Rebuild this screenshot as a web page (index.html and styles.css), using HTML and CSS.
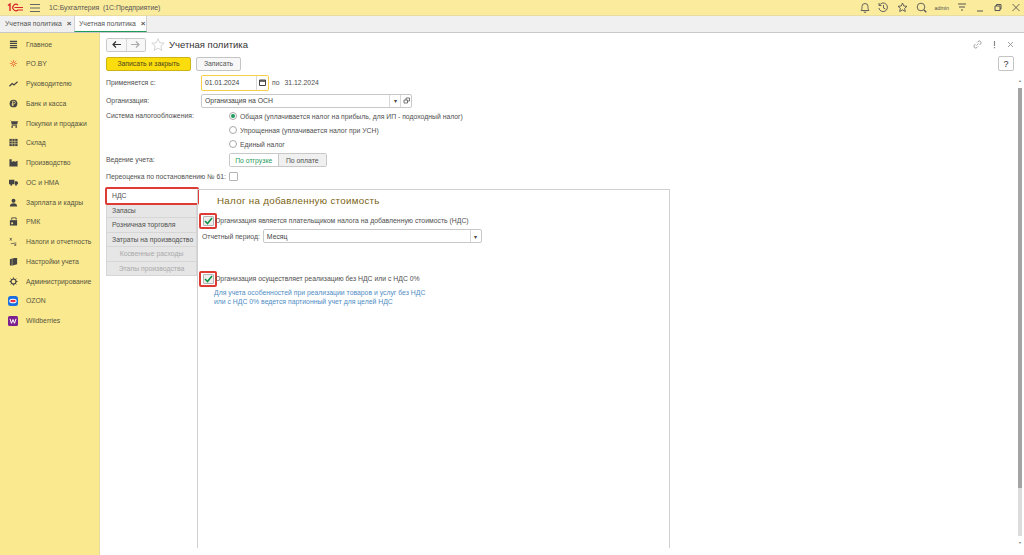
FILE: index.html
```html
<!DOCTYPE html>
<html lang="ru">
<head>
    <meta charset="UTF-8">
    <title>Учетная политика</title>
    <link rel="stylesheet" href="styles.css">
</head>
<body>
    <div class="topbar">
        <svg class="logo" width="16" height="9" viewBox="0 0 16 9"><path d="M1 2.500L3 1v7" fill="none" stroke="#d8232a" stroke-width="1.400"/><path d="M11 2A3.200 3.200 0 1 0 11 7H16" fill="none" stroke="#d8232a" stroke-width="1.200"/><path d="M7.500 4.500H16" stroke="#d8232a" stroke-width="1"/></svg>
        <svg class="burger" width="10" height="8" viewBox="0 0 10 8"><path d="M0 .5h10M0 4h10M0 7.500h10" stroke="#666" stroke-width="1"/></svg>
        <div class="app-title">1С:Бухгалтерия&nbsp; (1С:Предприятие)</div>
        <div class="top-icons">
            <svg class="ti" width="10" height="11" viewBox="0 0 10 11"><path d="M1 8.500c1-1 1-2 1-4a3 3 0 0 1 6 0c0 2 0 3 1 4zM4 9.500a1 1 0 0 0 2 0" fill="none" stroke="#555" stroke-width=".9"/></svg>
            <svg class="ti" width="11" height="11" viewBox="0 0 11 11"><path d="M1.500 3a4.300 4.300 0 1 1-.6 3M1 1v2.500h2.500M5.500 3v3l2 1" fill="none" stroke="#555" stroke-width=".9"/></svg>
            <svg class="ti" width="11" height="11" viewBox="0 0 11 11"><path d="M5.500 1l1.300 3 3.200.3-2.400 2.100.7 3.100-2.800-1.600-2.800 1.600.7-3.100L1 4.300l3.200-.3z" fill="none" stroke="#555" stroke-width=".9"/></svg>
            <svg class="ti" width="11" height="11" viewBox="0 0 11 11"><circle cx="5" cy="5" r="3.800" fill="none" stroke="#555" stroke-width=".9"/><path d="M8 8l2.300 2.300" stroke="#555" stroke-width="1.300"/></svg>
            <span class="user">admin</span>
            <svg class="ti" width="10" height="9" viewBox="0 0 10 9"><path d="M1 1h8M2 4h6M4 7h2" stroke="#555" stroke-width="1"/></svg>
            <svg class="ti" width="10" height="9" viewBox="0 0 10 9"><path d="M2 8h6" stroke="#555" stroke-width="1"/></svg>
            <svg class="ti" width="10" height="9" viewBox="0 0 10 9"><path d="M2 3h5v4.500H2zM3.500 3V1.500H8V6H7" fill="none" stroke="#555" stroke-width="1"/></svg>
            <svg class="ti" width="10" height="9" viewBox="0 0 10 9"><path d="M1.500 1l7 7M8.500 1l-7 7" stroke="#555" stroke-width=".9"/></svg>
        </div>
    </div>

    <div class="tabbar">
        <div class="doc-tab">Учетная политика <span class="tab-x">×</span></div>
        <div class="doc-tab active">Учетная политика <span class="tab-x">×</span></div>
    </div>

    <div class="main">
        <nav class="sidebar">
            <div class="nav-item">
                <svg class="nav-icon" viewBox="0 0 10 10"><path d="M1 1.500h8M1 3.800h8M1 6.200h8M1 8.500h8" stroke="#444" stroke-width="1.300"/></svg>
                Главное
            </div>
            <div class="nav-item">
                <svg class="nav-icon" viewBox="0 0 10 10"><path d="M5 1v8M1 5h8M2 2l6 6M8 2L2 8" stroke="#e2672f" stroke-width=".8"/><circle cx="5" cy="5" r="1.500" fill="#fbe98f" stroke="#e2672f" stroke-width=".7"/></svg>
                PO.BY
            </div>
            <div class="nav-item">
                <svg class="nav-icon" viewBox="0 0 10 10"><path d="M.5 8l3-3 2 1.500L9.500 3" fill="none" stroke="#444" stroke-width="1.400"/></svg>
                Руководителю
            </div>
            <div class="nav-item">
                <svg class="nav-icon" viewBox="0 0 10 10"><circle cx="5" cy="5" r="4.300" fill="#444"/><path d="M4 8V2.500h1.500a1.400 1.400 0 0 1 0 2.900H3M3 6.700h2.500" fill="none" stroke="#fbe98f" stroke-width=".8"/></svg>
                Банк и касса
            </div>
            <div class="nav-item">
                <svg class="nav-icon" viewBox="0 0 10 10"><path d="M0 1h2l.5 1.500H10L9 6H3L2 1.500" fill="#444"/><path d="M3 7h6" stroke="#444"/><circle cx="3.500" cy="8.800" r="1" fill="#444"/><circle cx="8" cy="8.800" r="1" fill="#444"/></svg>
                Покупки и продажи
            </div>
            <div class="nav-item">
                <svg class="nav-icon" viewBox="0 0 10 10"><path d="M.5 1h9v8h-9z" fill="#444"/><path d="M.5 3.700h9M.5 6.300h9M3.500 1v8M6.500 1v8" stroke="#fbe98f" stroke-width=".6"/></svg>
                Склад
            </div>
            <div class="nav-item">
                <svg class="nav-icon" viewBox="0 0 10 10"><path d="M.5 9.500v-8H3v3l3-1.500v1.500l3.500-1.500v6.500z" fill="#444"/></svg>
                Производство
            </div>
            <div class="nav-item">
                <svg class="nav-icon" viewBox="0 0 10 10"><path d="M0 2h6v5H0zM6.500 3.500H9L10 5v2H6.500z" fill="#444"/><circle cx="2.500" cy="7.500" r="1.100" fill="#444"/><circle cx="7.800" cy="7.500" r="1.100" fill="#444"/></svg>
                ОС и НМА
            </div>
            <div class="nav-item">
                <svg class="nav-icon" viewBox="0 0 10 10"><circle cx="5" cy="3" r="2.200" fill="#444"/><path d="M1 9.500c0-3 1.500-3.800 4-3.800s4 .8 4 3.800z" fill="#444"/></svg>
                Зарплата и кадры
            </div>
            <div class="nav-item">
                <svg class="nav-icon" viewBox="0 0 10 10"><path d="M1 3.500h8v6H1z" fill="#444"/><path d="M3 3V1h5v2" fill="none" stroke="#444"/><path d="M2.500 6h2v2h-2z" fill="#fbe98f"/></svg>
                РМК
            </div>
            <div class="nav-item">
                <svg class="nav-icon" viewBox="0 0 10 10"><path d="M1 4l2-3M3 4L1 1M2 7.500l6-1M6 10l2-2.500M8 10L6 7.500" stroke="#444" stroke-width=".8" fill="none"/></svg>
                Налоги и отчетность
            </div>
            <div class="nav-item">
                <svg class="nav-icon" viewBox="0 0 10 10"><path d="M1 2.500L6 1h3v7L4 9.500H1z" fill="#444"/><path d="M3.500 2.500v7" stroke="#fbe98f" stroke-width=".5"/></svg>
                Настройки учета
            </div>
            <div class="nav-item">
                <svg class="nav-icon" viewBox="0 0 10 10"><circle cx="5" cy="5" r="2.800" fill="none" stroke="#444" stroke-width="1.300"/><path d="M5 .5v2M5 7.500v2M.5 5h2M7.500 5h2M1.800 1.800l1.400 1.400M6.800 6.800l1.400 1.400M8.200 1.800L6.800 3.200M3.200 6.800L1.800 8.200" stroke="#444" stroke-width="1"/></svg>
                Администрирование
            </div>
            <div class="nav-item">
                <svg class="nav-icon brand" viewBox="0 0 10 10"><rect width="10" height="10" rx="2.500" fill="#1a6fe0"/><ellipse cx="5" cy="5" rx="3.700" ry="2.300" fill="#fff"/><ellipse cx="5" cy="5" rx="2.800" ry="1.300" fill="#e8304a"/></svg>
                OZON
            </div>
            <div class="nav-item">
                <svg class="nav-icon brand" viewBox="0 0 10 10"><rect width="10" height="10" rx="1.500" fill="#7d1f8f"/><path d="M2 2.800l1.500 4.500L5 3.500l1.500 3.800L8 2.800" fill="none" stroke="#fff" stroke-width="1"/></svg>
                Wildberries
            </div>
        </nav>

        <div class="content">
            <div class="title-row">
                <div class="nav-btns">
                    <span class="nav-btn"><svg width="9" height="7" viewBox="0 0 9 7"><path d="M9 3.500H2M4 .5l-3 3 3 3" fill="none" stroke="#333" stroke-width="1.200"/></svg></span>
                    <span class="nav-btn"><svg width="9" height="7" viewBox="0 0 9 7"><path d="M0 3.500h7M5 .5l3 3-3 3" fill="none" stroke="#aaa" stroke-width="1.200"/></svg></span>
                </div>
                <svg class="fav" width="14" height="13" viewBox="0 0 14 13"><path d="M7 .8l1.800 4 4.400.4-3.300 2.900 1 4.300L7 10.100l-3.900 2.300 1-4.300L.8 5.200l4.400-.4z" fill="none" stroke="#cfcfcf" stroke-width=".9"/></svg>
                <h1 class="page-title">Учетная политика</h1>
                <div class="win-tools">
                    <svg width="9" height="9" viewBox="0 0 9 9"><path d="M3.500 5.500l2-2M4 2.500l1-1A1.700 1.700 0 0 1 7.500 4l-1 1M5 6.500l-1 1A1.700 1.700 0 0 1 1.500 5l1-1" fill="none" stroke="#888" stroke-width=".8"/></svg>
                    <svg width="3" height="9" viewBox="0 0 3 9"><path d="M1.500 1v5M1.500 7v1.300" stroke="#888" stroke-width="1.200"/></svg>
                    <svg width="7" height="7" viewBox="0 0 7 7"><path d="M1 1l5 5M6 1L1 6" stroke="#888" stroke-width=".8"/></svg>
                </div>
            </div>

            <div class="command-row">
                <button class="btn btn-primary">Записать и закрыть</button>
                <button class="btn">Записать</button>
                <button class="btn btn-help">?</button>
            </div>

            <div class="form-row row-date">
                <label class="lbl lbl-short">Применяется с:</label>
                <div class="field field-date">01.01.2024<span class="field-btn cal"><svg width="7" height="7" viewBox="0 0 7 7"><path d="M.5 1h6v5.500h-6z" fill="none" stroke="#444"/><path d="M.5 2h6" stroke="#444" stroke-width="1.500"/></svg></span></div>
                <span class="date-to">по</span>
                <span class="date-end">31.12.2024</span>
            </div>

            <div class="form-row row-org">
                <label class="lbl lbl-short">Организация:</label>
                <div class="field field-org">Организация на ОСН<span class="field-btn">▾</span><span class="field-btn"><svg width="7" height="7" viewBox="0 0 7 7"><path d="M1 3h3.500v3H1zM3 3V1h3.500v3h-2" fill="none" stroke="#555" stroke-width=".8"/></svg></span></div>
            </div>

            <div class="tax-block">
                <label class="lbl lbl-tax">Система налогообложения:</label>
                <div class="radios">
                    <div class="radio-row"><span class="radio on"></span>Общая (уплачивается налог на прибыль, для ИП - подоходный налог)</div>
                    <div class="radio-row"><span class="radio"></span>Упрощенная (уплачивается налог при УСН)</div>
                    <div class="radio-row"><span class="radio"></span>Единый налог</div>
                </div>
            </div>

            <div class="form-row row-toggle">
                <label class="lbl lbl-tax">Ведение учета:</label>
                <div class="toggle">
                    <span class="toggle-item on">По отгрузке</span>
                    <span class="toggle-item">По оплате</span>
                </div>
            </div>

            <div class="form-row row-check">
                <label class="lbl lbl-tax">Переоценка по постановлению № 61:</label>
                <span class="checkbox"></span>
            </div>

            <div class="tabs-area">
                <div class="side-tabs">
                    <div class="side-tab current">НДС</div>
                    <div class="side-tab">Запасы</div>
                    <div class="side-tab">Розничная торговля</div>
                    <div class="side-tab">Затраты на производство</div>
                    <div class="side-tab off">Косвенные расходы</div>
                    <div class="side-tab off">Этапы производства</div>
                </div>
                <div class="tab-panel">
                    <h2 class="panel-title">Налог на добавленную стоимость</h2>
                    <div class="check-row">
                        <span class="mark-box"><span class="checkbox checked"><svg width="9" height="8" viewBox="0 0 9 8"><path d="M1 4l2.500 2.500L8 1" fill="none" stroke="#0d9448" stroke-width="1.600"/></svg></span></span>
                        <span class="check-text">Организация является плательщиком налога на добавленную стоимость (НДС)</span>
                    </div>
                    <div class="period-row">
                        <label class="lbl">Отчетный период:</label>
                        <div class="field field-period">Месяц<span class="field-btn">▾</span></div>
                    </div>
                    <div class="check-row second">
                        <span class="mark-box"><span class="checkbox checked"><svg width="9" height="8" viewBox="0 0 9 8"><path d="M1 4l2.500 2.500L8 1" fill="none" stroke="#0d9448" stroke-width="1.600"/></svg></span></span>
                        <span class="check-text">Организация осуществляет реализацию без НДС или с НДС 0%</span>
                    </div>
                    <p class="hint">Для учета особенностей при реализации товаров и услуг без НДС<br>или с НДС 0% ведется партионный учет для целей НДС</p>
                </div>
            </div>
        </div>

        <div class="scrollbar">
            <span class="arrow">▴</span>
            <div class="track"><div class="thumb"></div></div>
            <span class="arrow">▾</span>
        </div>
    </div>
</body>
</html>
```

FILE: styles.css
```css
* {
    box-sizing: border-box;
}
html, body {
    margin: 0;
    padding: 0;
    height: 555px;
    overflow: hidden;
}
body {
    font-family: "Liberation Sans", Arial, sans-serif;
    font-size: 6.85px;
    color: #505050;
    background-color: #fff;
}

/* top bar */
.topbar {
    height: 16px;
    background-color: #fbeb9c;
    display: flex;
    align-items: center;
    border-bottom: 1px solid #e8dca0;
}
.logo {
    margin-left: 7px;
    margin-right: 7px;
    flex-shrink: 0;
}
.app-title {
    margin-left: 9px;
    font-size: 6.85px;
    color: #555;
}
.top-icons {
    margin-left: auto;
    display: flex;
    align-items: center;
    gap: 8px;
    padding-right: 3px;
}
.ti {
    display: block;
}
.user {
    font-size: 5.3px;
    margin: 0;
}

/* open windows */
.tabbar {
    height: 17px;
    background-color: #f0f0f0;
    border-bottom: 1px solid #c8c8c8;
    display: flex;
}
.doc-tab {
    width: 74px;
    padding: 4px 0 0 5px;
    color: #555;
    white-space: nowrap;
}
.doc-tab.active {
    background-color: #fff;
    width: 73px;
    border-left: 1px solid #d0d0d0;
    border-right: 1px solid #d0d0d0;
    border-bottom: 1px solid #1f9a5a;
    height: 16px;
    padding-left: 4px;
}
.tab-x {
    font-weight: bold;
    font-size: 8px;
    line-height: 6px;
    margin-left: 3px;
}

.main {
    display: flex;
    height: 522px;
}

/* sections */
.sidebar {
    width: 100px;
    flex-shrink: 0;
    background-color: #fbe98f;
    border-right: 1px solid #e6dc9e;
    padding-top: 1.2px;
}
.nav-item {
    height: 19.75px;
    display: flex;
    align-items: center;
    padding-left: 9px;
    gap: 8px;
    color: #55553f;
    white-space: nowrap;
}
.nav-icon {
    width: 9px;
    height: 9px;
    flex-shrink: 0;
}
.nav-icon.brand {
    width: 10px;
    height: 10px;
    margin-left: -1px;
}

/* form */
.content {
    flex: 1;
    padding: 4px 0 0 6px;
    min-width: 0;
}
.title-row {
    display: flex;
    align-items: center;
    height: 15px;
}
.nav-btns {
    display: flex;
    border: 1px solid #c9c9c9;
    border-radius: 2px;
    height: 14px;
    width: 40px;
}
.nav-btn {
    flex: 1;
    display: flex;
    align-items: center;
    justify-content: center;
    background-color: #f7f7f7;
}
.nav-btn + .nav-btn {
    border-left: 1px solid #d8d8d8;
}
.fav {
    margin-left: 5px;
}
.page-title {
    margin: 0 0 0 4px;
    font-size: 9.5px;
    font-weight: normal;
    color: #333;
}
.win-tools {
    margin-left: auto;
    display: flex;
    align-items: center;
    gap: 11px;
    margin-right: 3px;
}
.command-row {
    display: flex;
    align-items: center;
    margin-top: 4px;
    height: 15px;
}
.btn {
    height: 14px;
    padding: 0;
    border: 1px solid #c4c4c4;
    border-radius: 2px;
    background-color: #f7f7f7;
    font-family: inherit;
    font-size: 6.85px;
    color: #555;
    width: 45px;
    margin-left: 5px;
}
.btn-primary {
    width: 85px;
    margin-left: 0;
    background-color: #fbdc0c;
    border-color: #cdb415;
    color: #4a4420;
}
.btn-help {
    width: 16px;
    height: 15px;
    margin-left: auto;
    margin-right: 3px;
    font-size: 9px;
    color: #333;
    background-color: #fff;
}
.form-row {
    display: flex;
    align-items: center;
}
.lbl {
    white-space: nowrap;
}
.lbl-short {
    width: 95px;
    flex-shrink: 0;
}
.lbl-tax {
    width: 123px;
    flex-shrink: 0;
    line-height: 14px;
}
.field {
    display: flex;
    align-items: center;
    height: 14px;
    border: 1px solid #c8c8c8;
    border-radius: 2px;
    padding-left: 3px;
    background-color: #fff;
    color: #444;
}
.field-btn {
    width: 11px;
    height: 100%;
    border-left: 1px solid #d8d8d8;
    display: flex;
    align-items: center;
    justify-content: center;
    font-size: 6px;
    flex-shrink: 0;
}
.row-date {
    margin-top: 4px;
    height: 15px;
}
.field-date {
    width: 68px;
    height: 16px;
    border: 1px solid #f7ce46;
    justify-content: space-between;
}
.field-date .cal {
    width: 12px;
}
.date-to {
    margin-left: 3px;
}
.date-end {
    margin-left: 5px;
}
.row-org {
    margin-top: 3px;
    height: 15px;
}
.field-org {
    width: 211px;
}
.field-org .field-btn:first-of-type {
    margin-left: auto;
}
.tax-block {
    display: flex;
    margin-top: 1px;
}
.radios {
    display: flex;
    flex-direction: column;
}
.radio-row {
    display: flex;
    align-items: center;
    height: 14px;
}
.radio {
    width: 8px;
    height: 8px;
    border: 1px solid #a9a9a9;
    border-radius: 50%;
    margin-right: 3px;
    display: flex;
    align-items: center;
    justify-content: center;
}
.radio.on::after {
    content: "";
    width: 4px;
    height: 4px;
    border-radius: 50%;
    background-color: #1f9a5a;
}
.row-toggle {
    margin-top: 2px;
    height: 14px;
}
.toggle {
    display: flex;
    height: 14px;
    width: 98px;
    border: 1px solid #c8c8c8;
    border-radius: 2px;
}
.toggle-item {
    flex: 1;
    display: flex;
    align-items: center;
    justify-content: center;
    background-color: #f0f0f0;
    border-left: 1px solid #c8c8c8;
}
.toggle-item.on {
    background-color: #fff;
    color: #1f9a5a;
    border-left: 0;
}
.row-check {
    margin-top: 2px;
    height: 15px;
}
.checkbox {
    width: 9px;
    height: 9px;
    border: 1px solid #b4b4b4;
    border-radius: 1px;
    background-color: #fff;
    display: flex;
    align-items: center;
    justify-content: center;
}

/* tabs */
.tabs-area {
    display: flex;
    margin-top: 4px;
    height: 360px;
    margin-left: -1px;
}
.side-tabs {
    width: 93px;
    flex-shrink: 0;
    padding-left: 1px;
}
.side-tab {
    width: 91px;
    height: 14.5px;
    line-height: 13.5px;
    background-color: #e6e6e6;
    border: 1px solid #d6d6d6;
    border-top: 0;
    padding-left: 5px;
    white-space: nowrap;
}
.side-tab.current {
    width: 94px;
    margin-top: -1px;
    margin-left: -1px;
    height: 18px;
    line-height: 14px;
    background-color: #fff;
    border: 2px solid #de3b34;
    border-radius: 2px;
    padding-left: 5px;
}
.side-tab.current + .side-tab {
    height: 13px;
    line-height: 11px;
}
.side-tab.off {
    color: #aaa;
    text-align: center;
    padding-left: 0;
}
.tab-panel {
    width: 473px;
    margin-top: 1px;
    margin-left: -1px;
    border: 1px solid #d0d0d0;
    border-bottom: 0;
    padding: 5px 0 0 7px;
    flex-shrink: 0;
}
.panel-title {
    margin: 0 0 0 12px;
    font-size: 9.75px;
    font-weight: normal;
    color: #7a6213;
    letter-spacing: .3px;
}
.check-row {
    display: flex;
    align-items: center;
    margin-top: 6px;
    margin-left: -6px;
    height: 17px;
}
.check-row.second {
    margin-top: 27px;
}
.mark-box {
    width: 18px;
    height: 16px;
    border: 2px solid #de3b34;
    border-radius: 2px;
    display: flex;
    align-items: center;
    justify-content: center;
    flex-shrink: 0;
}
.checkbox.checked {
    width: 11px;
    height: 10px;
    background-color: #eee;
}
.check-text {
    margin-left: -2px;
    white-space: nowrap;
}
.period-row {
    display: flex;
    align-items: center;
    gap: 3px;
    margin-left: -3px;
}
.field-period {
    width: 219px;
    justify-content: space-between;
}
.hint {
    margin: 2px 0 0 9px;
    color: #4f8cc4;
    line-height: 8.5px;
}

/* scroll */
.scrollbar {
    width: 5px;
    margin-right: 2px;
    padding: 45px 0 9px;
    display: flex;
    flex-direction: column;
    align-items: center;
    flex-shrink: 0;
    height: 522px;
}
.arrow {
    font-size: 4px;
    line-height: 6px;
    color: #777;
}
.track {
    flex: 1;
    width: 4px;
    margin: 4px 0;
    background-color: #dcdcdc;
}
.thumb {
    height: 400px;
    background-color: #a3a3a3;
}
```
